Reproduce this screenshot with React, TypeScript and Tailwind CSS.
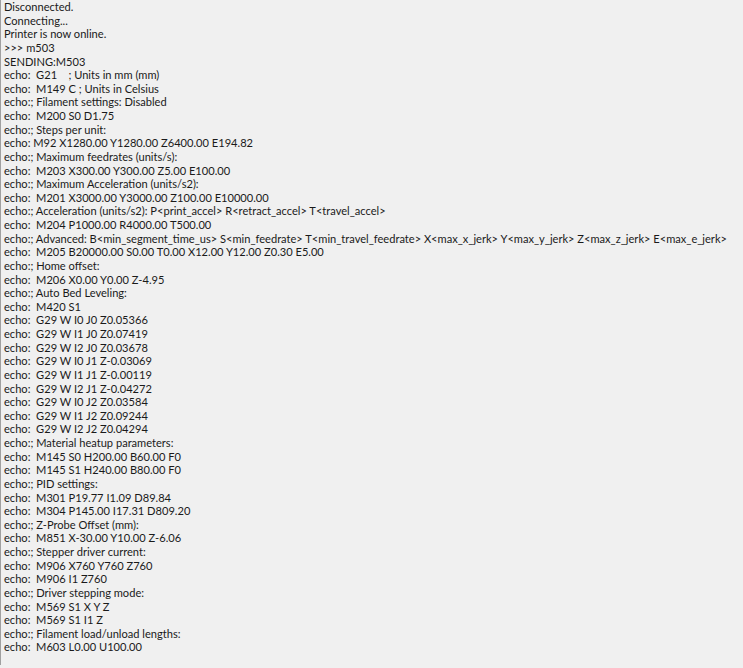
const lines: string[] = [
  "Disconnected.",
  "Connecting...",
  "Printer is now online.",
  ">>> m503",
  "SENDING:M503",
  "echo:  G21    ; Units in mm (mm)",
  "echo:  M149 C ; Units in Celsius",
  "echo:; Filament settings: Disabled",
  "echo:  M200 S0 D1.75",
  "echo:; Steps per unit:",
  "echo: M92 X1280.00 Y1280.00 Z6400.00 E194.82",
  "echo:; Maximum feedrates (units/s):",
  "echo:  M203 X300.00 Y300.00 Z5.00 E100.00",
  "echo:; Maximum Acceleration (units/s2):",
  "echo:  M201 X3000.00 Y3000.00 Z100.00 E10000.00",
  "echo:; Acceleration (units/s2): P<print_accel> R<retract_accel> T<travel_accel>",
  "echo:  M204 P1000.00 R4000.00 T500.00",
  "echo:; Advanced: B<min_segment_time_us> S<min_feedrate> T<min_travel_feedrate> X<max_x_jerk> Y<max_y_jerk> Z<max_z_jerk> E<max_e_jerk>",
  "echo:  M205 B20000.00 S0.00 T0.00 X12.00 Y12.00 Z0.30 E5.00",
  "echo:; Home offset:",
  "echo:  M206 X0.00 Y0.00 Z-4.95",
  "echo:; Auto Bed Leveling:",
  "echo:  M420 S1",
  "echo:  G29 W I0 J0 Z0.05366",
  "echo:  G29 W I1 J0 Z0.07419",
  "echo:  G29 W I2 J0 Z0.03678",
  "echo:  G29 W I0 J1 Z-0.03069",
  "echo:  G29 W I1 J1 Z-0.00119",
  "echo:  G29 W I2 J1 Z-0.04272",
  "echo:  G29 W I0 J2 Z0.03584",
  "echo:  G29 W I1 J2 Z0.09244",
  "echo:  G29 W I2 J2 Z0.04294",
  "echo:; Material heatup parameters:",
  "echo:  M145 S0 H200.00 B60.00 F0",
  "echo:  M145 S1 H240.00 B80.00 F0",
  "echo:; PID settings:",
  "echo:  M301 P19.77 I1.09 D89.84",
  "echo:  M304 P145.00 I17.31 D809.20",
  "echo:; Z-Probe Offset (mm):",
  "echo:  M851 X-30.00 Y10.00 Z-6.06",
  "echo:; Stepper driver current:",
  "echo:  M906 X760 Y760 Z760",
  "echo:  M906 I1 Z760",
  "echo:; Driver stepping mode:",
  "echo:  M569 S1 X Y Z",
  "echo:  M569 S1 I1 Z",
  "echo:; Filament load/unload lengths:",
  "echo:  M603 L0.00 U100.00",
];

// serial console output, one div per line
const App = () => {
  return (
    <div className="w-[743px] h-[668px] bg-[#f0f0f0] overflow-hidden">
      <div className="h-[665px] border-l border-[#a0a0a0] pl-[3px] font-['Lato',sans-serif] text-[11.1px] leading-[13.62px] text-[#1a1a1a]">
        {lines.map((line, i) => (
          <div key={i} className="whitespace-pre">{line}</div>
        ))}
      </div>
    </div>
  );
};

export default App;
